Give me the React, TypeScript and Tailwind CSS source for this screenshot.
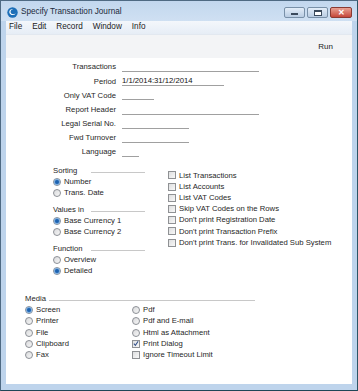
import type { ReactNode } from 'react'

const font = "font-['Liberation_Sans',Arial,sans-serif]"

function Radio({ on }: { on?: boolean }) {
  return (
    <span className="flex h-[8px] w-[8px] shrink-0 items-center justify-center rounded-full border border-[#8d9096] bg-gradient-to-br from-[#d9dadc] to-[#f7f7f7]">
      {on && <span className="h-[4px] w-[4px] rounded-full bg-[#1d63b0] shadow-[0_0_1px_1px_#6fa6de]" />}
    </span>
  )
}

function Check({ on }: { on?: boolean }) {
  return (
    <span className="flex h-[8px] w-[8px] shrink-0 items-center justify-center border border-[#8f9194] bg-gradient-to-br from-[#dedfe0] to-[#f8f8f8]">
      {on && (
        <svg width="7" height="7" viewBox="0 0 7 7">
          <path d="M1 3.6 L2.8 5.6 L6 0.8" fill="none" stroke="#33508a" strokeWidth="1.2" />
        </svg>
      )}
    </span>
  )
}

function RadioRow({ label, on, h = 'h-[11px]' }: { label: string; on?: boolean; h?: string }) {
  return (
    <div className={`flex ${h} items-center gap-[3px]`}>
      <Radio on={on} />
      <span>{label}</span>
    </div>
  )
}

function CheckRow({ label, on, h = 'h-[11.2px]' }: { label: string; on?: boolean; h?: string }) {
  return (
    <div className={`flex ${h} items-center gap-[3px]`}>
      <Check on={on} />
      <span>{label}</span>
    </div>
  )
}

function GroupHead({ label, w, children }: { label: string; w: string; children?: ReactNode }) {
  return (
    <div className="flex h-[11px] items-center">
      <span className={w}>{label}</span>
      <span className="mt-[3px] flex-1 border-b border-[#c8c8c8]" />
      {children}
    </div>
  )
}

const fields: [string, string, string][] = [
  ['Transactions', '', 'w-[137px]'],
  ['Period', '1/1/2014:31/12/2014', 'w-[102px]'],
  ['Only VAT Code', '', 'w-[32px]'],
  ['Report Header', '', 'w-[137px]'],
  ['Legal Serial No.', '', 'w-[67px]'],
  ['Fwd Turnover', '', 'w-[67px]'],
  ['Language', '', 'w-[17px]'],
]

export default function App() {
  return (
    <div className={`flex h-[391px] w-[358px] flex-col border border-[#4f6a83] border-b-[#1f4656] border-r-[#2c5566] bg-[#bed4ec] ${font} text-[7.7px] text-[#262626]`}>
      {/* title bar */}
      <div className="flex h-[20px] shrink-0 items-center bg-gradient-to-b from-[#c2d7ee] to-[#cfe0f2] pl-[6px] pr-[5px]">
        <svg width="11" height="11" viewBox="0 0 11 11" className="mt-[2px]">
          <circle cx="5.5" cy="5.5" r="5.2" fill="#1d6fb8" />
          <path d="M2.3 5.2 C2.6 8.4 7.4 9.2 8.6 6.2 C7.2 7.6 4.2 7.6 3.6 5.2 C3.3 3.6 4.6 2.4 6.2 2.6 C4.4 1.6 2.2 2.8 2.3 5.2Z" fill="#fff" />
        </svg>
        <span className="ml-[3px] mt-[3px] text-[8.2px] text-[#1b2a3a]">Specify Transaction Journal</span>
        <div className="ml-auto mt-[3px] flex gap-[2px]">
          <div className="flex h-[11px] w-[21px] items-center justify-center rounded-[2px] border border-[#7990a8] bg-gradient-to-b from-[#e3edf8] to-[#b9cce2]">
            <span className="mt-[3px] h-[2px] w-[7px] border border-[#3b4a5c] bg-white" />
          </div>
          <div className="flex h-[11px] w-[21px] items-center justify-center rounded-[2px] border border-[#7990a8] bg-gradient-to-b from-[#e3edf8] to-[#b9cce2]">
            <span className="h-[6px] w-[8px] border border-[#3b4a5c] border-t-2 bg-white" />
          </div>
          <div className="flex h-[11px] w-[22px] items-center justify-center rounded-[2px] border border-[#8a3a32] bg-gradient-to-b from-[#e8a093] to-[#c4463a]">
            <span className="text-[8px] font-bold leading-none text-white">✕</span>
          </div>
        </div>
      </div>

      <div className="flex flex-1 flex-col px-[5px] pb-[6px]">
        {/* menu bar */}
        <div className="flex h-[13px] shrink-0 items-center gap-[10px] bg-gradient-to-b from-[#f4f7fb] to-[#e6edf6] pl-[3px] text-[8.2px] text-[#1b1b1b]">
          <span>File</span>
          <span>Edit</span>
          <span>Record</span>
          <span>Window</span>
          <span>Info</span>
        </div>
        {/* toolbar */}
        <div className="flex h-[24px] shrink-0 items-center justify-end border-t border-[#e2e8f0] bg-[#f3f4f6] pr-[19px] text-[8px] text-[#222]">
          Run
        </div>

        {/* content */}
        <div className="flex-1 bg-white">
          <div className="pt-[2px]">
            {fields.map(([label, value, w]) => (
              <div key={label} className="flex h-[14.2px] items-center">
                <span className="w-[110px] text-right">{label}</span>
                <span className={`ml-[6px] h-[10px] ${w} border-b border-[#a0a0a0] leading-[10px] text-[#111]`}>{value}</span>
              </div>
            ))}
          </div>

          <div className="ml-[47px] mt-[6px] flex">
            <div className="w-[92px]">
              <GroupHead label="Sorting" w="w-[38px]" />
              <RadioRow label="Number" on />
              <RadioRow label="Trans. Date" />
              <div className="mt-[6px]">
                <GroupHead label="Values in" w="w-[38px]" />
              </div>
              <RadioRow label="Base Currency 1" on />
              <RadioRow label="Base Currency 2" />
              <div className="mt-[6px]">
                <GroupHead label="Function" w="w-[38px]" />
              </div>
              <RadioRow label="Overview" />
              <RadioRow label="Detailed" on />
            </div>
            <div className="ml-[23px] mt-[4.5px]">
              <CheckRow label="List Transactions" />
              <CheckRow label="List Accounts" />
              <CheckRow label="List VAT Codes" />
              <CheckRow label="Skip VAT Codes on the Rows" />
              <CheckRow label="Don't print Registration Date" />
              <CheckRow label="Don't print Transaction Prefix" />
              <CheckRow label="Don't print Trans. for Invalidated Sub System" />
            </div>
          </div>

          <div className="ml-[19px] mt-[17px] w-[230px]">
            <GroupHead label="Media" w="w-[24px]" />
            <div className="flex">
              <div className="w-[107px]">
                <RadioRow label="Screen" on h="h-[11.3px]" />
                <RadioRow label="Printer" h="h-[11.3px]" />
                <RadioRow label="File" h="h-[11.3px]" />
                <RadioRow label="Clipboard" h="h-[11.3px]" />
                <RadioRow label="Fax" h="h-[11.3px]" />
              </div>
              <div>
                <RadioRow label="Pdf" h="h-[11.3px]" />
                <RadioRow label="Pdf and E-mail" h="h-[11.3px]" />
                <RadioRow label="Html as Attachment" h="h-[11.3px]" />
                <CheckRow label="Print Dialog" on h="h-[11.3px]" />
                <CheckRow label="Ignore Timeout Limit" h="h-[11.3px]" />
              </div>
            </div>
          </div>
        </div>
      </div>
    </div>
  )
}
